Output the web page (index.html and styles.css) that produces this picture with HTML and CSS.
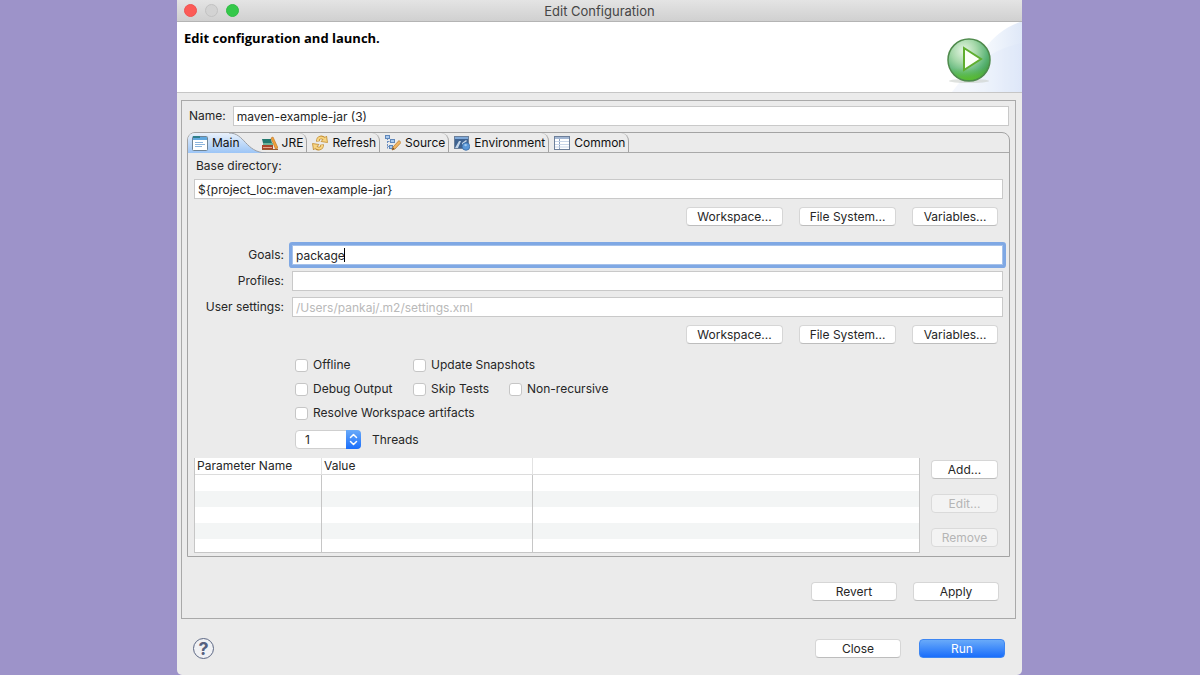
FILE: index.html
```
<!DOCTYPE html>
<html lang="en">

<head>
    <meta charset="utf-8">
    <title>Edit Configuration</title>
    <link rel="stylesheet" href="styles.css">
</head>

<body>
    <div class="window">
        <div class="titlebar">
            <div class="lights">
                <button class="light red" aria-label="Close window"></button>
                <button class="light gray" aria-label="Minimize window" disabled></button>
                <button class="light green" aria-label="Zoom window"></button>
            </div>
            <span class="title">Edit Configuration</span>
        </div>

        <div class="header">
            <h1>Edit configuration and launch.</h1>
            <svg class="banner" width="90" height="70" viewBox="0 0 90 70">
                <defs>
                    <linearGradient id="sky" x1="0" x2="1" y1="0" y2="0">
                        <stop offset="0" stop-color="#ffffff" />
                        <stop offset="0.5" stop-color="#f0f5fc" />
                        <stop offset="1" stop-color="#dfe8f8" />
                    </linearGradient>
                    <radialGradient id="ball" cx="0.38" cy="0.28" r="0.75">
                        <stop offset="0" stop-color="#e6f5e4" />
                        <stop offset="0.4" stop-color="#a5d8a9" />
                        <stop offset="0.75" stop-color="#5ab376" />
                        <stop offset="1" stop-color="#3d9a3f" />
                    </radialGradient>
                    <linearGradient id="glow" x1="0" x2="0" y1="0" y2="1">
                        <stop offset="0.7" stop-color="#62c43a" stop-opacity="0" />
                        <stop offset="1" stop-color="#5cc02c" stop-opacity="0.9" />
                    </linearGradient>
                </defs>
                <path d="M35 70 C42 38 58 10 88 0 H90 V70 Z" fill="url(#sky)" />
                <path d="M20 70 C42 40 62 27 90 21 V70 Z" fill="#dbe6f7" opacity="0.3" />
                <ellipse cx="37" cy="59" rx="20" ry="2" fill="#c9cfc9" opacity="0.6" />
                <circle cx="37" cy="38" r="21" fill="url(#ball)" stroke="#4f8a4c" stroke-width="1.5" />
                <circle cx="37" cy="38" r="20" fill="url(#glow)" />
                <path d="M32 26 L49 37 L32 48 Z" fill="#fbfff8" stroke="#5fae2f" stroke-width="2" />
            </svg>
        </div>

        <div class="content">
            <div class="frame">
                <div class="name-row">
                    <label for="name">Name:</label>
                    <input class="field" type="text" id="name" value="maven-example-jar (3)">
                </div>

                <div class="folder">
                    <div class="tabs" role="tablist">
                        <button class="tab selected" role="tab" aria-selected="true">
                            <svg class="tab-shape" width="78" height="20" viewBox="0 0 78 20">
                                <defs>
                                    <linearGradient id="tabfill" x1="0" x2="0" y1="0" y2="1">
                                        <stop offset="0" stop-color="#e9f1fb" />
                                        <stop offset="1" stop-color="#9cc5f6" />
                                    </linearGradient>
                                </defs>
                                <path d="M0 20 V6 Q1 0 7 0 H41 C57 0 57 19 78 20 Z" fill="url(#tabfill)" />
                                <path d="M41 0 C57 0 57 19 78 20" fill="none" stroke="#9a9fa6" />
                            </svg>
                            <svg width="16" height="16" viewBox="0 0 16 16">
                                <rect x="0.5" y="1.5" width="15" height="14" rx="1" fill="#fff" stroke="#6f8495" />
                                <rect x="1" y="2" width="14" height="3" fill="#5fa8df" />
                                <path d="M1 1 h7 v2 h-7 z" fill="#2f7f8c" />
                                <path d="M3 7.5 h8 M3 9.5 h10 M3 11.5 h7" stroke="#8bb4dd" />
                            </svg>
                            Main
                        </button>
                        <button class="tab" role="tab">
                            <svg width="16" height="16" viewBox="0 0 16 16">
                                <path d="M0 4 h9 l1 4 h-9 z" fill="#23796f" />
                                <path d="M1 8 h10 v2 h-10 z" fill="#6db39a" />
                                <path d="M0 10 h11 v4 h-11 z" fill="#a8452a" />
                                <path d="M1 12.5 h9" stroke="#e7a58a" />
                                <path d="M9 3 l2 -1 l5 11 l-2.5 1 z" fill="#f0a13b" stroke="#b96f1c" stroke-width="0.6" />
                                <path d="M0 14.5 h16" stroke="#9a5a31" />
                            </svg>
                            JRE
                        </button>
                        <button class="tab" role="tab">
                            <svg width="16" height="16" viewBox="0 0 16 16">
                                <g fill="none" stroke="#c08a2c" stroke-width="3.6">
                                    <path d="M6 6.5 C5.500 3 9 1 12 3.500" />
                                    <path d="M10 9.500 C10.500 13 7 15 4 12.500" />
                                </g>
                                <g fill="#f7d584" stroke="#c08a2c" stroke-width="0.8" stroke-linejoin="round">
                                    <path d="M14.5 1 L15.500 7.500 L9 6.500 Z" />
                                    <path d="M1.500 15 L0.500 8.500 L7 9.500 Z" />
                                </g>
                                <g fill="none" stroke="#f7d584" stroke-width="2">
                                    <path d="M6 6 C5.500 3 9 1 12.500 4" />
                                    <path d="M10 10 C10.500 13 7 15 3.500 12" />
                                </g>
                            </svg>
                            Refresh
                        </button>
                        <button class="tab" role="tab">
                            <svg width="16" height="16" viewBox="0 0 16 16">
                                <path d="M2.5 3 V13.5 M2.5 6.5 H6 M2.5 11.5 H6" fill="none" stroke="#6b8fc2" stroke-dasharray="2 1" />
                                <rect x="0.5" y="0.5" width="4" height="3" fill="#a9c9ee" stroke="#5f87ba" />
                                <rect x="5.5" y="4.5" width="4" height="3" fill="#a9c9ee" stroke="#5f87ba" />
                                <rect x="4.5" y="10.5" width="3" height="3" fill="#a9c9ee" stroke="#5f87ba" />
                                <path d="M7 15 L8 12 L14 5.5 L16 7.5 L10 14 Z" fill="#f2b662" stroke="#b97c35" stroke-width="0.8" />
                                <path d="M7 15 L8 12.5 L9.5 14 Z" fill="#6b4c30" />
                            </svg>
                            Source
                        </button>
                        <button class="tab" role="tab">
                            <svg width="16" height="16" viewBox="0 0 16 16">
                                <rect x="0.5" y="1.5" width="14" height="12" fill="#3e6290" stroke="#6b7f99" />
                                <rect x="1" y="2" width="13" height="2" fill="#7fa9d9" />
                                <path d="M1 13 L5 6 L7 6 L4 13 Z M8 8 L12 5 L13 6 L8 10 Z" fill="#c3d6ea" />
                                <circle cx="12" cy="11.5" r="3.8" fill="#5b98d8" stroke="#3a6ca6" stroke-width="0.8" />
                                <path d="M10 10 q2 -2 3 0 q-1 2 -2 1 z" fill="#a4cbee" />
                            </svg>
                            Environment
                        </button>
                        <button class="tab" role="tab">
                            <svg width="16" height="16" viewBox="0 0 16 16">
                                <rect x="0.5" y="1.5" width="15" height="13" fill="#fff" stroke="#6d7f99" />
                                <rect x="1" y="2" width="14" height="2" fill="#a3b7d4" />
                                <path d="M5.5 4 V14" stroke="#8ba0bf" />
                                <path d="M1 6.5 H15 M1 9.5 H15 M1 12 H15" stroke="#c9d6e8" />
                            </svg>
                            Common
                        </button>
                    </div>

                    <div class="panel" role="tabpanel">
                        <label class="base-label" for="base">Base directory:</label>
                        <input class="field" type="text" id="base" value="${project_loc:maven-example-jar}">
                        <div class="buttons">
                            <button class="btn wide">Workspace...</button>
                            <button class="btn wide">File System...</button>
                            <button class="btn">Variables...</button>
                        </div>

                        <div class="form">
                            <label for="goals">Goals:</label>
                            <div class="focused">
                                <input class="field" type="text" id="goals" value="package">
                                <span class="caret"></span>
                            </div>
                            <label for="profiles">Profiles:</label>
                            <input class="field" type="text" id="profiles">
                            <label for="settings">User settings:</label>
                            <input class="field" type="text" id="settings" placeholder="/Users/pankaj/.m2/settings.xml">
                        </div>
                        <div class="buttons">
                            <button class="btn wide">Workspace...</button>
                            <button class="btn wide">File System...</button>
                            <button class="btn">Variables...</button>
                        </div>

                        <div class="options">
                            <label><input type="checkbox">Offline</label>
                            <label class="span2"><input type="checkbox">Update Snapshots</label>
                            <label><input type="checkbox">Debug Output</label>
                            <label><input type="checkbox">Skip Tests</label>
                            <label><input type="checkbox">Non-recursive</label>
                            <label class="span3"><input type="checkbox">Resolve Workspace artifacts</label>
                        </div>
                        <div class="threads">
                            <div class="combo">
                                <select id="threads">
                                    <option>1</option>
                                    <option>2</option>
                                    <option>3</option>
                                    <option>4</option>
                                </select>
                                <svg class="arrows" width="15" height="18" viewBox="0 0 15 18">
                                    <path d="M4.5 7 L7.5 4 L10.5 7 M4.5 11 L7.5 14 L10.5 11" fill="none" stroke="#fff" stroke-width="1.5" stroke-linecap="round" stroke-linejoin="round" />
                                </svg>
                            </div>
                            <label for="threads">Threads</label>
                        </div>

                        <div class="params">
                            <table>
                                <thead>
                                    <tr><th class="col-name">Parameter Name</th><th class="col-value">Value</th><th></th></tr>
                                </thead>
                                <tbody>
                                    <tr><td></td><td></td><td></td></tr>
                                    <tr><td></td><td></td><td></td></tr>
                                    <tr><td></td><td></td><td></td></tr>
                                    <tr><td></td><td></td><td></td></tr>
                                    <tr><td></td><td></td><td></td></tr>
                                </tbody>
                            </table>
                            <div class="side">
                                <button class="btn">Add...</button>
                                <button class="btn" disabled>Edit...</button>
                                <button class="btn" disabled>Remove</button>
                            </div>
                        </div>
                    </div>
                </div>

                <div class="actions">
                    <button class="btn">Revert</button>
                    <button class="btn">Apply</button>
                </div>
            </div>
        </div>

        <div class="footer">
            <button class="help" aria-label="Help">?</button>
            <div class="actions">
                <button class="btn">Close</button>
                <button class="btn primary">Run</button>
            </div>
        </div>
    </div>
</body>

</html>
```
FILE: styles.css
```
* {
    box-sizing: border-box;
}

body {
    margin: 0;
    padding: 0 178px 0 177px;
    background-color: #9d93c9;
    font-family: Inter, "Liberation Sans", sans-serif;
    font-size: 12px;
    line-height: 16px;
    color: #262626;
}

button, input, select {
    font: inherit;
    color: inherit;
    margin: 0;
}

.window {
    display: flex;
    flex-direction: column;
    min-height: 100vh;
    background-color: #ebebeb;
    border-radius: 0 0 5px 5px;
}

/* title bar */
.titlebar {
    display: grid;
    grid-template-columns: 1fr auto 1fr;
    align-items: center;
    height: 22px;
    padding: 0 7px;
    background: linear-gradient(#e4e4e4, #d0d0d0);
    border-bottom: 1px solid #b4b4b4;
}

.lights {
    display: flex;
    gap: 8px;
}

.light {
    width: 13px;
    height: 13px;
    padding: 0;
    border: 1px solid #ef5350;
    border-radius: 50%;
    background-color: #fc5b57;
}

.light.gray {
    background-color: #d3d3d3;
    border-color: #c2c2c2;
}

.light.green {
    background-color: #34c84a;
    border-color: #2fbd44;
}

.title {
    font-size: 13px;
    color: #454545;
}

/* white header */
.header {
    display: flex;
    justify-content: space-between;
    height: 71px;
    background-color: #fff;
    border-bottom: 1px solid #c6c6c6;
}

.header h1 {
    margin: 8px 0 0 7px;
    font-family: "Open Sans", sans-serif;
    font-size: 13px;
    line-height: 16px;
    font-weight: bold;
    color: #000;
}

.content {
    padding: 7px 6px 0 4px;
}

.frame {
    border: 1px solid #a9a9a9;
    padding: 5px 5px 17px;
}

.name-row {
    display: flex;
    align-items: center;
    gap: 7px;
    padding: 0 1px 0 2px;
}

.field {
    display: block;
    width: 100%;
    height: 20px;
    padding: 0 3px;
    border: 1px solid #c9c9c9;
    background-color: #fff;
    outline: none;
}

.field::placeholder {
    color: #b9b9b9;
}

/* tab folder */
.folder {
    margin-top: 6px;
    border: 1px solid #a3a3a3;
    border-radius: 8px 8px 0 0;
}

.tabs {
    display: flex;
    height: 20px;
    border-bottom: 1px solid #a9a9a9;
}

.tab {
    display: flex;
    align-items: center;
    gap: 4px;
    padding: 0 3px 0 5px;
    border: 0;
    border-right: 1px solid #a3a3a3;
    border-radius: 0 8px 0 0;
    background: none;
    color: #111;
}

.tab.selected {
    position: relative;
    z-index: 0;
    padding: 0 17px 0 4px;
    border: 0;
}

/* the slanted tab runs on under its neighbour */
.tab.selected .tab-shape {
    position: absolute;
    left: 0;
    top: 0;
    z-index: -1;
}

.panel {
    padding: 5px 6px 3px;
}

.base-label {
    display: block;
    padding-left: 2px;
    margin-bottom: 5px;
}

/* push buttons */
.btn {
    min-width: 86px;
    height: 19px;
    padding: 0 9px;
    border: 1px solid #d6d6d6;
    border-bottom-color: #bdbdbd;
    border-radius: 4px;
    background-color: #fff;
    line-height: 16px;
}

.btn.wide {
    min-width: 97px;
}

.btn:active {
    background-color: #ddd;
}

.btn:disabled {
    color: #b5b5b5;
    background-color: #f3f3f3;
    border-color: #dadada;
}

.btn.primary {
    color: #fff;
    border-color: #3d86f2;
    background: linear-gradient(#69aaf9, #1a6efb);
}

.buttons {
    display: flex;
    justify-content: flex-end;
    gap: 16px;
    padding-right: 5px;
    margin-top: 8px;
}

.form {
    display: grid;
    grid-template-columns: 90px 1fr;
    align-items: center;
    gap: 6px 8px;
    margin-top: 19px;
}

.form label {
    text-align: right;
}

.focused {
    position: relative;
    border-radius: 1px;
    box-shadow: 0 0 0 3px #7fa8e4;
}

.focused .field {
    border-color: #a5c1ea;
}

.caret {
    position: absolute;
    left: 52px;
    top: 3px;
    width: 1px;
    height: 14px;
    background-color: #000;
}

.options {
    display: grid;
    grid-template-columns: 118px 96px auto;
    justify-content: start;
    gap: 8px 0;
    margin: 13px 0 0 101px;
}

.options label {
    display: flex;
    align-items: center;
    gap: 5px;
    white-space: nowrap;
}

.options .span2 {
    grid-column: span 2;
}

.options .span3 {
    grid-column: span 3;
}

.options input {
    appearance: none;
    width: 13px;
    height: 13px;
    border: 1px solid #c6c6c6;
    border-radius: 3px;
    background-color: #fff;
}

.options input:checked {
    background-color: #1a6efb;
}

.threads {
    display: flex;
    align-items: center;
    gap: 11px;
    margin: 9px 0 0 101px;
}

.combo {
    position: relative;
    height: 19px;
}

.combo select {
    appearance: none;
    width: 66px;
    height: 19px;
    padding: 0 20px 0 9px;
    border: 1px solid #cfcfcf;
    border-radius: 4px;
    background-color: #fff;
    line-height: 16px;
}

.arrows {
    position: absolute;
    right: 0;
    top: 0;
    height: 19px;
    border-radius: 0 4px 4px 0;
    background: linear-gradient(#69aaf9, #1a6efb);
    pointer-events: none;
}

/* parameter table */
.params {
    display: flex;
    gap: 11px;
    padding-right: 5px;
    margin-top: 9px;
}

table {
    flex: 1;
    table-layout: fixed;
    border-collapse: separate;
    border-spacing: 0;
    background-color: #fff;
    border: 1px solid #c6c6c6;
    border-top: 0;
}

th {
    height: 17px;
    padding: 0 2px;
    text-align: left;
    font-weight: normal;
    line-height: 16px;
    border-right: 1px solid #e2e2e2;
    border-bottom: 1px solid #dcdcdc;
}

td {
    height: 16px;
    padding: 0;
    border-right: 1px solid #c6c6c6;
}

th:last-child, td:last-child {
    border-right: 0;
}

tbody tr:nth-child(even) {
    background-color: #f3f5f5;
}

tbody tr:last-child td {
    height: 13px;
}

.col-name {
    width: 127px;
}

.col-value {
    width: 211px;
}

.side {
    display: flex;
    flex-direction: column;
    gap: 15px;
    padding-top: 2px;
}

.side .btn {
    min-width: 67px;
}

.actions {
    display: flex;
    justify-content: flex-end;
    gap: 16px;
}

.frame > .actions {
    margin-top: 25px;
    padding-right: 11px;
}

.footer {
    display: flex;
    justify-content: space-between;
    align-items: center;
    padding: 19px 17px 16px 16px;
}

.footer .actions {
    gap: 18px;
}

.help {
    width: 21px;
    height: 21px;
    padding: 0;
    border: 1px solid #5c6784;
    border-radius: 50%;
    background-color: #f0f1f4;
    color: #56617f;
    font-size: 18px;
    font-weight: bold;
    line-height: 18px;
}
```
